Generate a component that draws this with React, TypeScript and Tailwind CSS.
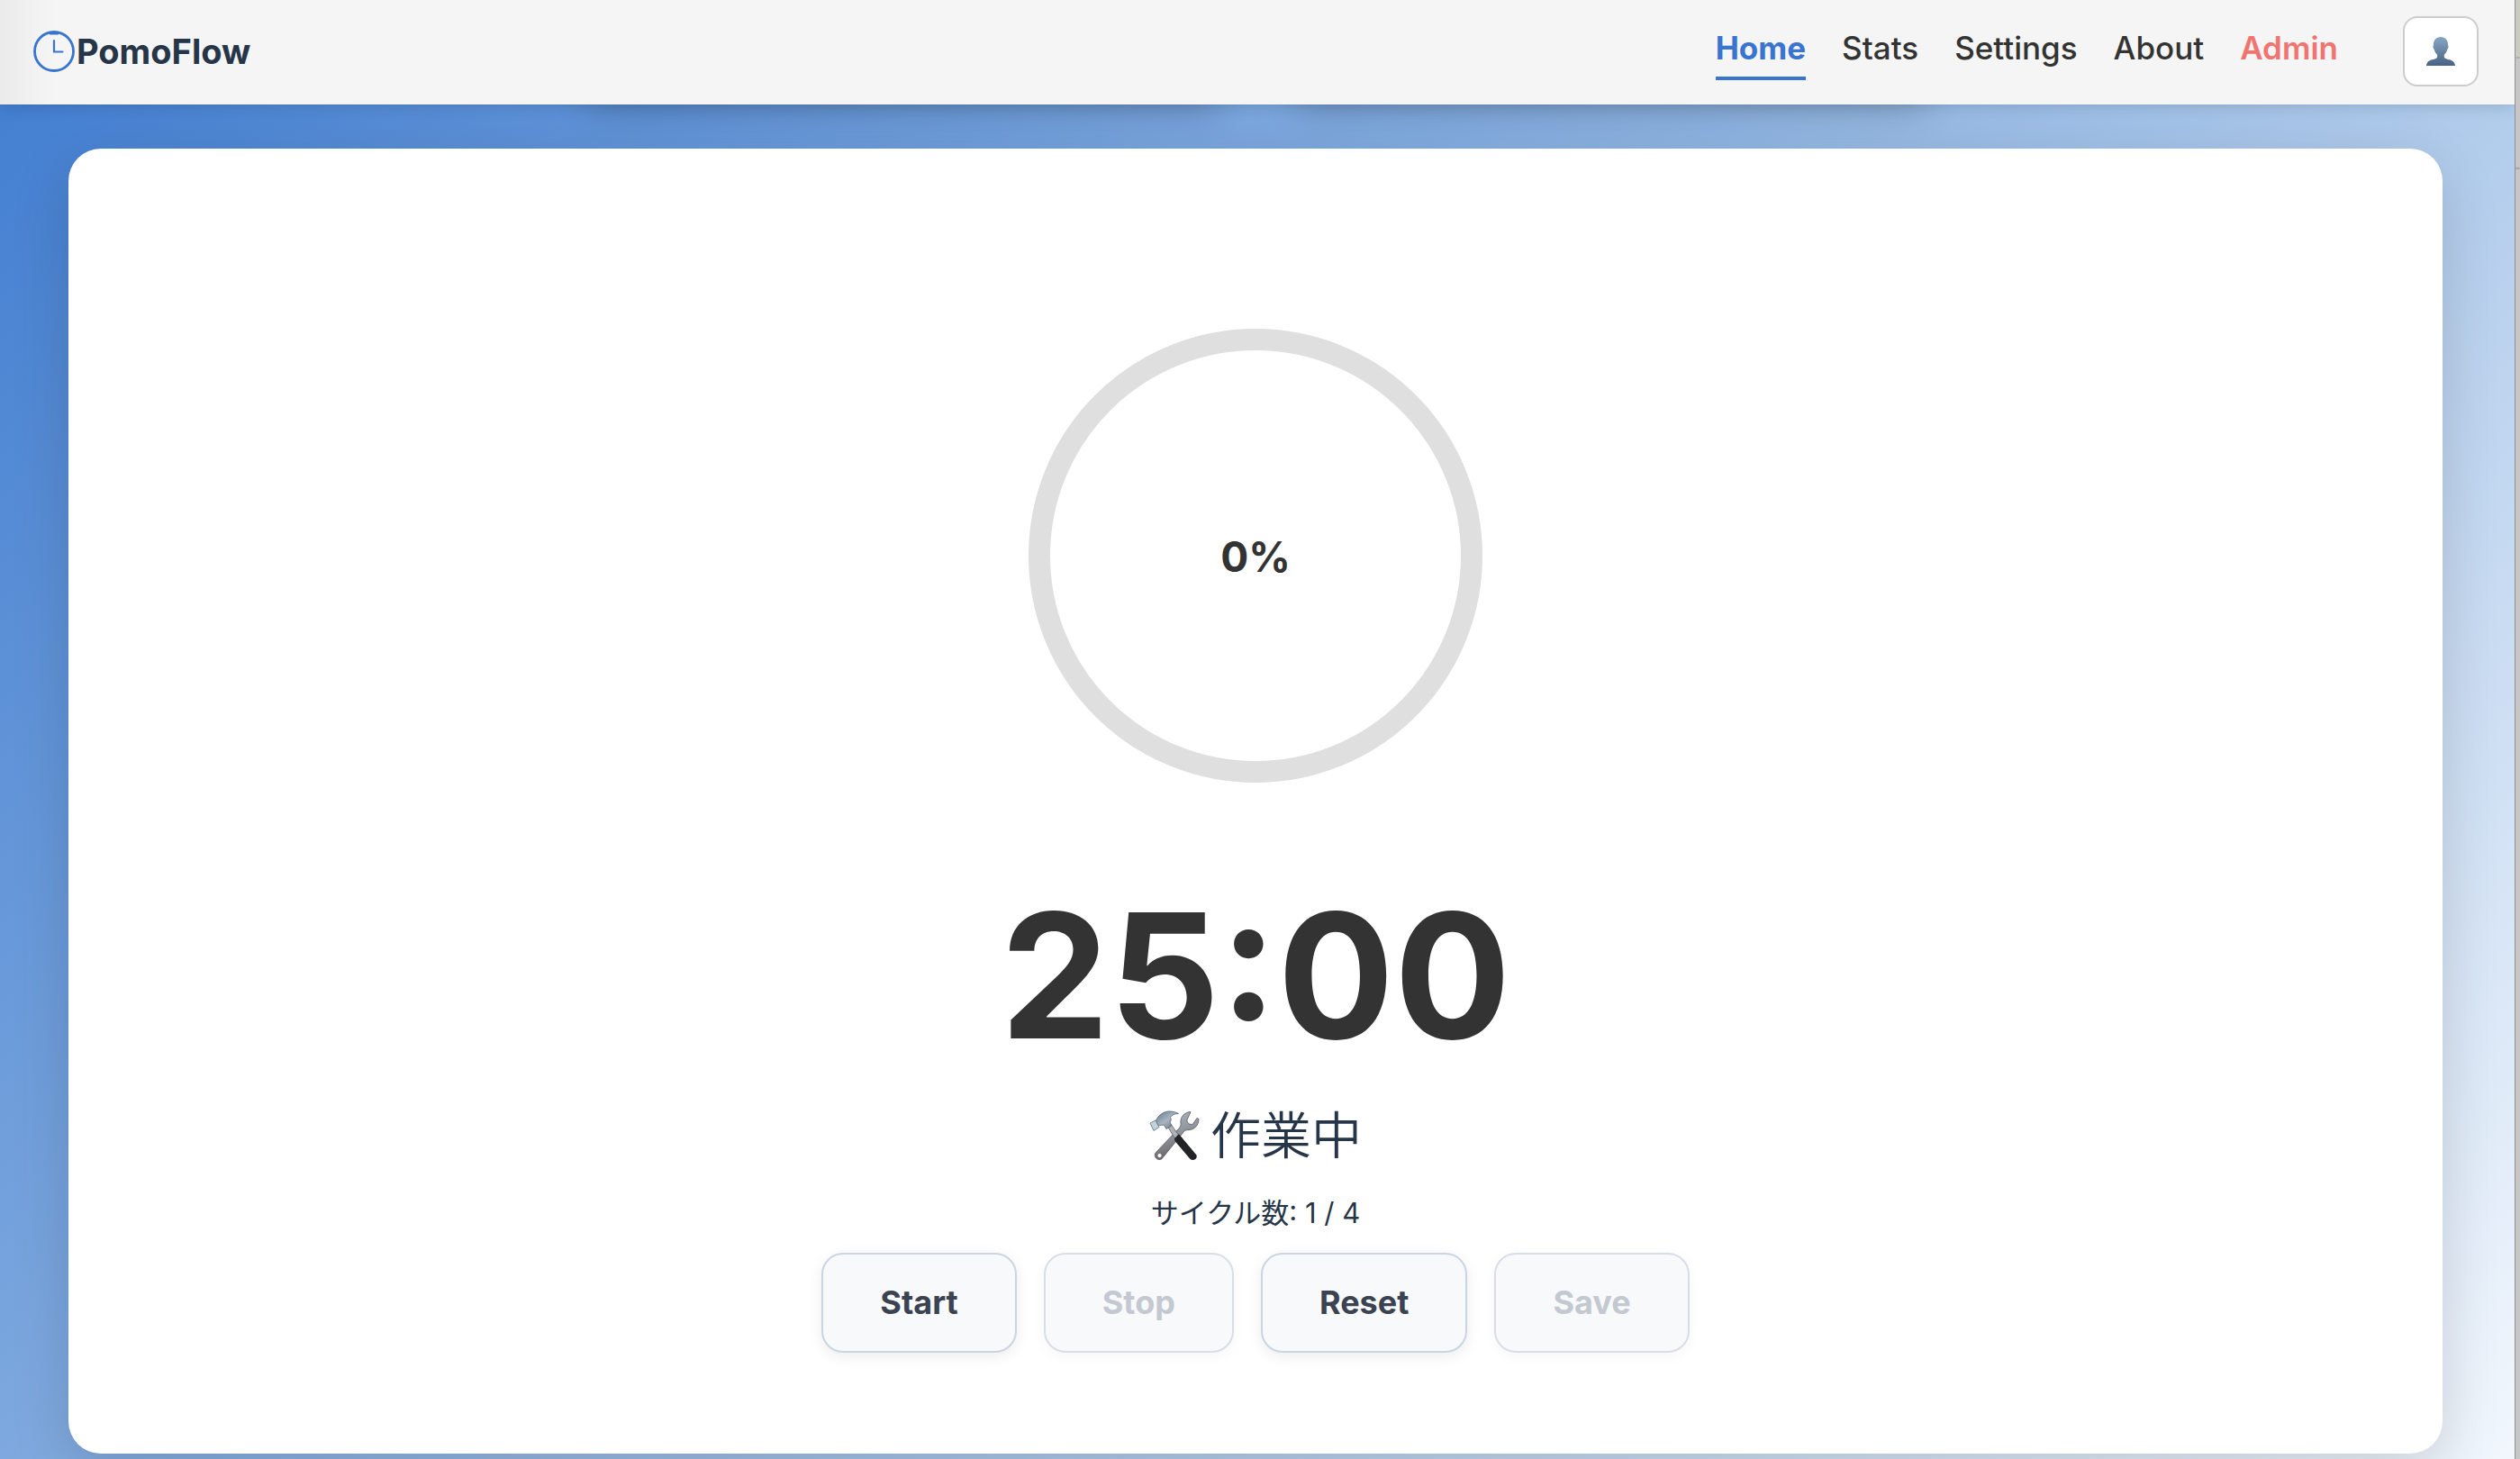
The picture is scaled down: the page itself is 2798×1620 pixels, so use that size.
import type { ReactNode } from "react";

const links = [
  { label: "Stats", className: "font-medium text-[#333333]" },
  { label: "Settings", className: "font-medium text-[#333333]" },
  { label: "About", className: "font-medium text-[#333333]" },
  { label: "Admin", className: "font-semibold text-[#f07470]" },
];

function ClockIcon() {
  return (
    <svg className="size-12" viewBox="0 0 48 48" fill="none" stroke="#3874d0" aria-hidden="true">
      <circle cx="24" cy="24" r="21.5" strokeWidth="2.8" />
      <path d="M20 3.800h8" strokeWidth="3.6" strokeLinecap="round" />
      <path d="M24 12v12.5h9.500" strokeWidth="2.2" strokeLinecap="round" />
    </svg>
  );
}

function UserIcon() {
  return (
    <svg className="h-8 w-8" viewBox="0 0 32 32" aria-hidden="true">
      <defs>
        <linearGradient id="bust" x1="0" y1="0" x2="0" y2="1">
          <stop offset="0" stopColor="#86a6c4" />
          <stop offset="1" stopColor="#4a6384" />
        </linearGradient>
      </defs>
      <path
        fill="url(#bust)"
        d="M16 0c-5 0-8 3.500-8 8.500 0 .8-.6 1.200-.5 2.500.1 1.400.8 2 1.200 3 .7 2.500 1.800 4.200 3.300 5.500.4 2.700.2 4.200-2.500 4.900C4.800 25.500.8 26 0 32h32c-.8-6-4.800-6.500-9.500-7.600-2.700-.7-2.900-2.200-2.500-4.900 1.500-1.300 2.600-3 3.300-5.500.4-1 1.100-1.600 1.200-3 .1-1.300-.5-1.700-.5-2.500C24 3.500 21 0 16 0z"
      />
    </svg>
  );
}

function ToolsIcon() {
  return (
    <svg className="size-14" viewBox="0 0 56 56" aria-hidden="true">
      <defs>
        <linearGradient id="steel" x1="0" y1="0" x2="0.3" y2="1">
          <stop offset="0" stopColor="#b4bcc6" />
          <stop offset="0.6" stopColor="#8b8f98" />
          <stop offset="1" stopColor="#6b5f62" />
        </linearGradient>
        <linearGradient id="head" x1="0" y1="0" x2="1" y2="1">
          <stop offset="0" stopColor="#5f7488" />
          <stop offset="0.5" stopColor="#aab6c2" />
          <stop offset="1" stopColor="#65666c" />
        </linearGradient>
      </defs>
      {/* wrench */}
      <path
        fill="url(#steel)"
        stroke="#55565c"
        strokeWidth="0.8"
        d="M46 1.500c-7 .5-12 6-11 13 .3 2-.2 3.200-1.500 4.800L7.500 46.500c-3 3.400 0 8.800 4.800 8 1.500-.3 2.500-1.500 3.500-3L38.500 23.500c1.300-1.400 2.500-1.800 4.500-1.800 7 0 12-5.200 12-12.200l-2-1-4.500 6.500c-3 1.500-7-.8-6.500-4.500z"
      />
      <circle cx="11.500" cy="50" r="2.500" fill="#fff" stroke="#55565c" strokeWidth="0.600" />
      {/* hammer */}
      <path d="M20 17l4-2 9 13-4 4z" fill="#b0b2b8" stroke="#606168" strokeWidth="0.800" />
      <path d="M28 31l4.500-4.500c1 .2 1.500.8 2 1.500L52.500 49.500c1.500 4.500-4 7-7 4.500L28.500 34z" fill="#222326" />
      <path
        fill="url(#head)"
        stroke="#55606c"
        strokeWidth="0.8"
        d="M7 12C10 5 17 .5 23 1c4 .2 7 1 9.500 2.500-4 0-7.500 1.500-9 4 1 2 1 4-.5 5.500 1 1.500 1.500 3 1 4.500L19 20.500c-1-1-1.500-3-2.500-4.500-2 .2-4.500.5-6 .5z"
      />
      <path d="M1 14l6-3 4 7.500-6 4z" fill="#c2d3de" stroke="#5c7081" strokeWidth="0.800" />
    </svg>
  );
}

function ControlButton({ children, disabled = false }: { children: ReactNode; disabled?: boolean }) {
  return (
    <button
      type="button"
      disabled={disabled}
      className="rounded-3xl border-2 border-[#cbd5e1] bg-[#f7f9fb] px-[63px] py-8 text-[36px] leading-[43px] font-bold text-[#3b4352] shadow-[0_4px_16px_rgba(0,0,0,0.08)] disabled:border-[#d9dde8] disabled:bg-[#f8f9fb] disabled:text-[#c3c8d1] disabled:shadow-[0_4px_16px_rgba(0,0,0,0.04)]"
    >
      {children}
    </button>
  );
}

function Header() {
  return (
    <div className="relative z-10 isolate">
      {/* soft shade under the middle of the bar */}
      <div className="absolute inset-0 -z-10 flex justify-center gap-[90px]">
        <div className="w-1/4 shadow-[0_4px_40px_rgba(0,0,0,0.2)]" />
        <div className="w-1/4 shadow-[0_4px_40px_rgba(0,0,0,0.2)]" />
      </div>
      <header className="flex items-center justify-between bg-[#f5f5f5] bg-linear-to-r from-[#ebebeb] to-[#f5f5f5] to-[60px] pt-[18px] pr-10 pb-5 pl-9 shadow-[0_2px_16px_rgba(0,0,0,0.15)]">
        <a href="#home" className="flex items-center gap-px text-[38px] leading-12 font-bold text-[#263548]">
          <ClockIcon />
          PomoFlow
        </a>
        <div className="flex items-center gap-[72px]">
          <nav className="mt-1.5 flex items-start gap-10 text-[35px] leading-11">
            <a href="#home" className="border-b-4 border-[#3874d0] pb-2.5 font-bold text-[#3874d0]">
              Home
            </a>
            {links.map((link) => (
              <a key={link.label} href={`#${link.label.toLowerCase()}`} className={link.className}>
                {link.label}
              </a>
            ))}
          </nav>
          <button
            type="button"
            aria-label="Account"
            className="flex h-[78px] w-[84px] items-center justify-center rounded-2xl border-2 border-[#cccccc] bg-white"
          >
            <UserIcon />
          </button>
        </div>
      </header>
    </div>
  );
}

function Timer() {
  return (
    <main className="mt-[49px] mr-20 mb-2 ml-[76px] flex flex-col items-center rounded-[36px] bg-white pt-[200px] pb-28 text-[#263548] shadow-[0_20px_64px_rgba(0,0,0,0.15)]">
      <div className="flex size-[504px] items-center justify-center rounded-full border-24 border-[#dfdfdf] pt-0.5 text-[46px] font-bold text-[#333333]">
        0%
      </div>
      <div className="mt-[94px] text-[192px] leading-[240px] font-bold text-[#333333]">25:00</div>
      <h2 className="mt-4 flex items-center gap-3 text-[56px] leading-[84px] font-[350]">
        <ToolsIcon />
        作業中
      </h2>
      <p className="mt-5 text-[31px] leading-12">サイクル数: 1 / 4</p>
      <div className="mt-5 flex gap-[30px]">
        <ControlButton>Start</ControlButton>
        <ControlButton disabled>Stop</ControlButton>
        <ControlButton>Reset</ControlButton>
        <ControlButton disabled>Save</ControlButton>
      </div>
    </main>
  );
}

function WindowEdge() {
  return (
    <div className="flex w-[6px] flex-col border-l border-[#8f9090] bg-[#c5c6c5]">
      <div className="h-[65px] border-b-2 border-[#b5b5a8] bg-[#cacbbf]" />
      <div className="h-[123px] border-b-2 border-[#a9aaaa]" />
    </div>
  );
}

function App() {
  return (
    <div className="flex min-h-screen font-[Inter,'Noto_Sans_CJK_JP',sans-serif]">
      <div className="flex-1 overflow-hidden bg-linear-135 from-[#3f7cd0] via-[#94b8e3] to-[#f2f7fd]">
        <Header />
        <Timer />
      </div>
      <WindowEdge />
    </div>
  );
}

export default App;
